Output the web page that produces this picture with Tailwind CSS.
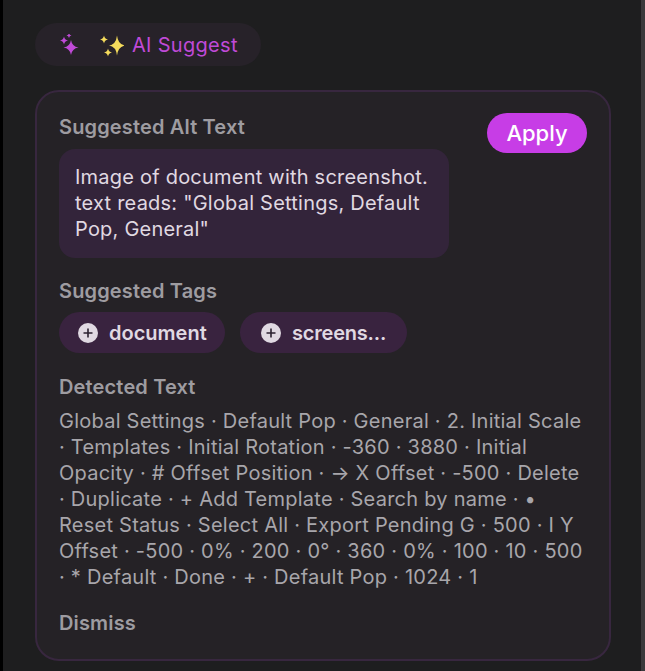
<!DOCTYPE html>
<html lang="en">
<head>
    <meta charset="UTF-8">
    <title>AI Suggest</title>
    <script src="https://cdn.jsdelivr.net/npm/@tailwindcss/browser@4"></script>
</head>
<body class="bg-[#1e1e1f] font-['Inter',sans-serif] w-[645px] h-[671px] overflow-hidden">
    <div class="h-[671px] border-l-[3px] border-l-black border-r-[4px] border-r-[#3a3a3c] pl-[32px] pr-[30px] pt-[23px]">
        <!-- AI Suggest button -->
        <div class="flex items-center w-[226px] h-[43px] rounded-full bg-[#272229] pl-[25px] text-[20px] tracking-[0.3px] text-[#c04ad8]">
            <svg class="w-[20px] h-[22px]" viewBox="0 0 20 22" fill="#c04ad8">
                <path d="M11 6Q12 12.500 18.500 13.500Q12 14.500 11 21Q10 14.500 3.500 13.500Q10 12.500 11 6z"/>
                <path d="M4 2.500Q4.600 5.900 8 6.500Q4.600 7.100 4 10.500Q3.400 7.100 0 6.500Q3.400 5.900 4 2.500z"/>
                <path d="M9 -1Q9.400 1.100 11.500 1.500Q9.400 1.900 9 4Q8.600 1.900 6.500 1.500Q8.600 1.100 9 -1z"/>
            </svg>
            <svg class="w-[24px] h-[24px] ml-[20px]" viewBox="0 0 24 24" fill="#f5dc5c">
                <path d="M17 2.500Q18 11.500 25 12.500Q18 13.500 17 22.500Q16 13.500 9 12.500Q16 11.500 17 2.500z"/>
                <path d="M4 2.500Q4.600 5.900 8 6.500Q4.600 7.100 4 10.500Q3.400 7.100 0 6.500Q3.400 5.900 4 2.500z"/>
                <path d="M8 15.500Q8.600 18.900 12 19.500Q8.600 20.100 8 23.500Q7.400 20.100 4 19.500Q7.400 18.900 8 15.500z"/>
            </svg>
            <span class="ml-[8px]">AI Suggest</span>
        </div>

        <!-- Suggestions card -->
        <div class="mt-[24px] w-[576px] h-[571px] rounded-[24px] border-2 border-[#38273f] bg-[#252226] pl-[22px] pr-[22px] pt-[22px]">
            <div class="flex justify-between">
                <div class="w-[390px]">
                    <div class="text-[20px] leading-[26px] font-semibold tracking-[0.15px] text-[#9e9ca1]">Suggested Alt Text</div>
                    <div class="mt-[9px] h-[109px] rounded-[16px] bg-[#33243a] px-[16px] pt-[15px] text-[20px] leading-[26px] tracking-[0.22px] text-[#e0d9e2]">
                        <div>Image of document with screenshot.</div>
                        <div>text reads: "Global Settings, Default</div>
                        <div>Pop, General"</div>
                    </div>
                </div>
                <button class="mt-[-1px] w-[100px] h-[40px] rounded-full bg-[#c73de6] text-white text-[22px] font-medium">Apply</button>
            </div>

            <div class="mt-[20px] text-[20px] leading-[26px] font-semibold tracking-[0.15px] text-[#9e9ca1]">Suggested Tags</div>
            <div class="mt-[8px] flex gap-[15px]">
                <div class="flex items-center h-[41px] w-[166px] rounded-full bg-[#39233f] pl-[19px] text-[20px] font-semibold text-[#e0d9e2]">
                    <svg class="w-[20px] h-[20px]" viewBox="0 0 20 20">
                        <circle cx="10" cy="10" r="10" fill="#e0d9e2"/>
                        <path d="M10 5.500v9M5.500 10h9" stroke="#2b2130" stroke-width="1.600"/>
                    </svg>
                    <span class="ml-[11px]">document</span>
                </div>
                <div class="flex items-center h-[41px] w-[167px] rounded-full bg-[#39233f] pl-[21px] text-[20px] font-semibold text-[#e0d9e2]">
                    <svg class="w-[20px] h-[20px]" viewBox="0 0 20 20">
                        <circle cx="10" cy="10" r="10" fill="#e0d9e2"/>
                        <path d="M10 5.500v9M5.500 10h9" stroke="#2b2130" stroke-width="1.600"/>
                    </svg>
                    <span class="ml-[11px] tracking-[-0.2px]">screens...</span>
                </div>
            </div>

            <div class="mt-[21px] text-[20px] leading-[26px] font-semibold tracking-[0.15px] text-[#9e9ca1]">Detected Text</div>
            <div class="mt-[8px] w-[535px] text-[20px] leading-[26px] tracking-[0.24px] text-[#a8a6ab]">
                <div>Global Settings · Default Pop · General · 2. Initial Scale</div>
                <div>· Templates · Initial Rotation · -360 · 3880 · Initial</div>
                <div>Opacity · # Offset Position · → X Offset · -500 · Delete</div>
                <div>· Duplicate · + Add Template · Search by name · •</div>
                <div>Reset Status · Select All · Export Pending G · 500 · I Y</div>
                <div>Offset · -500 · 0% · 200 · 0° · 360 · 0% · 100 · 10 · 500</div>
                <div>· * Default · Done · + · Default Pop · 1024 · 1</div>
            </div>

            <div class="mt-[20px] text-[20px] leading-[26px] font-semibold tracking-[0.15px] text-[#9e9ca1]">Dismiss</div>
        </div>
    </div>
</body>
</html>
